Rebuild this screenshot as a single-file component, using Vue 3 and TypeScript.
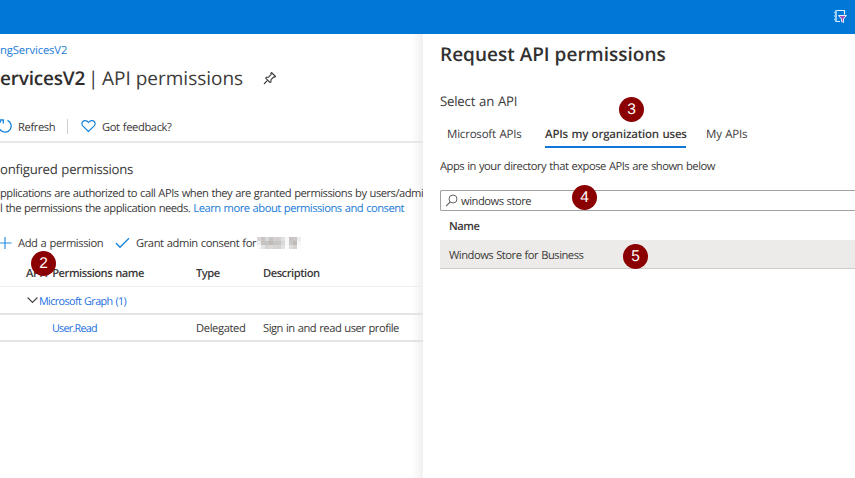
<script setup lang="ts">
interface Marker { label: string; left: number; top: number }

const markers: Marker[] = [
  { label: '2', left: 31, top: 251 },
  { label: '3', left: 619, top: 97 },
  { label: '4', left: 572, top: 185 },
  { label: '5', left: 623, top: 244 },
]
const mosaic: string[] = [
  '#d9d7d6', '#c9c4c2', '#dad8d8', '#c7c4c5', '#d5d0ce', '#d0d0d2', '#e3e1e0', '#f8f8f8', '#c6c3c2', '#cdc8c8', '#efeeee',
  '#eeeeee', '#c7c2c0', '#c3c3c5', '#bfbab8', '#c6c3c5', '#c9c5c2', '#d8d8d8', '#f8f8f8', '#cbc8c9', '#bdbab8', '#f8f8f8',
  '#f8f8f8', '#e5e3e2', '#d4d4d5', '#dedad8', '#d5d5d7', '#d5d2d0', '#e1e1e1', '#fbfbfb', '#dedddd', '#d6d3d2', '#fbfbfb',
]
</script>

<template>
  <div class="portal">
    <header class="topbar">
      <svg class="filter-icon" viewBox="0 0 16 16" width="16" height="16">
        <path d="M4 2.5H12.5V6.500M4 2.500V13.500H8" fill="none" stroke="#e2f1fc" stroke-width="1.2" />
        <path d="M4 2V14M2 4.500H5M2 8H5M2 11.500H5" fill="none" stroke="#9fd0f5" stroke-width="1.3" />
        <path d="M6.500 7.500H14.500L11.500 11V14.500L9.500 13.500V11Z" fill="#a34fc0" stroke="#e8f3fc" stroke-width="1" />
      </svg>
    </header>
    <div class="blades">
      <main class="overview">
        <nav class="crumb"><a class="t-crumb">ngServicesV2</a></nav>
        <h1 class="heading">
          <span class="t-app">ervicesV2</span><span class="t-bar">|</span><span class="t-page">API permissions</span>
          <svg class="pin" viewBox="0 0 14 14" width="14" height="14">
            <path d="M8.500 1.500 12.500 5.500 11.400 6.300 10.700 6 8 8.700 8 10.700 7 11.500 2.700 7.200 3.500 6.200 5.500 6.100 8.200 3.400 7.800 2.400ZM4.700 9.200 1 13" fill="none" stroke="#403e3d" stroke-width="1.1" stroke-linejoin="round" />
          </svg>
        </h1>
        <div class="toolbar">
          <svg class="refresh" viewBox="0 0 13 16" width="13" height="16">
            <path d="M7.500 2.300A6.200 6.200 0 1 1 1 3.200M0 2H3.300V5.500" fill="none" stroke="#1683dc" stroke-width="1.3" />
          </svg>
          <span class="t-refresh">Refresh</span>
          <i class="divider"></i>
          <svg class="heart" viewBox="0 0 15 14" width="15" height="14">
            <path d="M7.500 12.500 1.800 6.900C.2 5.200.8 2.700 2.700 1.900 4.500 1.100 6.300 1.800 7.500 3.500 8.700 1.800 10.500 1.100 12.300 1.900 14.200 2.700 14.800 5.200 13.200 6.900Z" fill="none" stroke="#1683dc" stroke-width="1.2" />
          </svg>
          <span class="t-feedback">Got feedback?</span>
        </div>
        <h2 class="section"><span class="t-section">onfigured permissions</span></h2>
        <p class="intro">
          <span class="t-intro1">pplications are authorized to call APIs when they are granted permissions by users/admi</span><br>
          <span class="t-intro2">l the permissions the application needs. <a>Learn more about permissions and consent</a></span>
        </p>
        <div class="commands">
          <svg class="plus" viewBox="0 0 12 14" width="12" height="14">
            <path d="M5 1V13M0 7H11.500" stroke="#2b8fe0" stroke-width="1.2" />
          </svg>
          <span class="t-add">Add a permission</span>
          <svg class="check" viewBox="0 0 15 12" width="15" height="12">
            <path d="M1 6 5 10.300 14 1.300" fill="none" stroke="#1683dc" stroke-width="1.3" />
          </svg>
          <span class="t-grant">Grant admin consent for</span>
          <span class="mosaic"><i v-for="(c, n) in mosaic" :key="n" :style="{ background: c }"></i></span>
        </div>
        <div class="grid head">
          <span class="c1"><span class="t-apis">API / Permissions name</span></span><span class="t-type">Type</span><span class="t-desc">Description</span>
        </div>
        <div class="grid group">
          <svg viewBox="0 0 11 8" width="11" height="8"><path d="M.6 1.500 5.500 6.500 10.400 1.500" fill="none" stroke="#4a4846" stroke-width="1.2" /></svg>
          <a class="t-graph">Microsoft Graph (1)</a>
        </div>
        <div class="grid entry">
          <a class="c1"><span class="t-user">User.Read</span></a><span class="t-deleg">Delegated</span><span class="t-sign">Sign in and read user profile</span>
        </div>
      </main>
      <aside class="request">
        <h2 class="title"><span class="t-title">Request API permissions</span></h2>
        <div class="select"><span class="t-select">Select an API</span></div>
        <div class="tabs">
          <span class="tab first"><span class="t-ms">Microsoft APIs</span></span>
          <span class="tab active"><span class="t-org">APIs my organization uses</span></span>
          <span class="tab"><span class="t-my">My APIs</span></span>
        </div>
        <p class="hint"><span class="t-hint">Apps in your directory that expose APIs are shown below</span></p>
        <div class="search">
          <svg viewBox="0 0 13 13" width="13" height="13"><circle cx="8" cy="5" r="4" fill="none" stroke="#6b6967" /><path d="M5.200 8 1 12.200" stroke="#6b6967" stroke-width="1.100" /></svg>
          <span class="t-query">windows store</span>
        </div>
        <div class="name"><span class="t-name">Name</span></div>
        <div class="result"><span class="t-result">Windows Store for Business</span></div>
      </aside>
    </div>
    <b v-for="m in markers" :key="m.label" class="marker" :style="{ left: m.left + 'px', top: m.top + 'px' }">{{ m.label }}</b>
  </div>
</template>

<style>
body { margin: 0; overflow: hidden; }
</style>

<style scoped>
.portal { position: relative; width: 855px; height: 478px; overflow: hidden; background: #fff; color: #3b3a39; font: 11.2px "Open Sans", "Noto Sans", sans-serif; text-rendering: geometricPrecision; letter-spacing: -.49px; word-spacing: .65px; white-space: nowrap; display: flex; flex-direction: column; }
.portal * { box-sizing: border-box; }
h1, h2, p { margin: 0; font-weight: 400; }
svg { flex: none; display: block; }
a { color: #1a7bd8; }
.topbar { height: 34px; flex: none; background: #0078d7; display: flex; justify-content: flex-end; padding: 8px 7px 0 0; }
.blades { flex: 1; display: flex; min-height: 0; }
.overview { width: 423px; flex: none; overflow: hidden; background: linear-gradient(to right, transparent 412px, #f0f0f0 423px); }
.crumb { height: 32px; display: flex; align-items: center; letter-spacing: -.1px; }
.heading { height: 24px; display: flex; align-items: center; font-size: 19px; letter-spacing: 0; word-spacing: 0; }
.t-app { font-weight: 600; color: #2f2d2c; letter-spacing: -.2px; width: 85px; }
.t-bar { margin: 0 0 0 3px; width: 14px; }
.t-page { width: 141px; }
.pin { margin-left: 20px; }
.toolbar { margin-top: 21px; height: 32px; display: flex; align-items: center; border-bottom: 2px solid #e8e8e8; letter-spacing: -.4px; }
.t-refresh { margin-left: 5px; width: 49px; padding-top: 2px; }
.t-feedback { padding-top: 2px; }
.divider { width: 1px; height: 15px; background: #d2d0ce; }
.heart { margin: 0 6px 0 13px; }
.section { height: 34px; margin-top: 9px; display: flex; align-items: center; font-size: 13.2px; letter-spacing: -.26px; }
.intro { line-height: 15px; letter-spacing: -.5px; }
.commands { height: 38px; margin-top: 8px; display: flex; align-items: center; letter-spacing: -.43px; }
.t-add { margin-left: 6px; width: 97px; }
.check { margin-right: 6px; }
.t-grant { width: 121px; }
.mosaic { width: 44px; height: 12px; display: grid; grid-template-columns: repeat(11, 4px); grid-auto-rows: 4px; filter: blur(.6px); }
.grid { display: flex; align-items: center; }
.head { height: 25px; padding: 0 0 2px 26px; font-weight: 600; border-bottom: 1px solid #eee; }
.c1 { width: 170px; }
.t-type { width: 67px; }
.group { height: 28px; padding-left: 27px; border-bottom: 2px solid #e4e4e4; }
.t-graph { margin-left: 1px; padding-top: 2px; color: #2470e0; font-size: 10.8px; letter-spacing: -.6px; }
.entry { height: 27px; padding: 2px 0 0 52px; border-bottom: 2px solid #e4e4e4; }
.entry .c1 { width: 144px; color: #2470e0; font-size: 10.8px; letter-spacing: -.75px; }
.t-deleg { width: 67px; letter-spacing: -.38px; }
.request { flex: 1; min-width: 0; background: #fff; padding-left: 17px; }
.title { height: 40px; display: flex; align-items: center; font-size: 19px; font-weight: 600; color: #323130; letter-spacing: 0; word-spacing: 0; }
.select { height: 34px; margin-top: 10px; display: flex; align-items: center; font-size: 13.2px; letter-spacing: -.2px; }
.tabs { height: 30px; display: flex; gap: 20px; padding-left: 7px; font-size: 11.5px; letter-spacing: -.2px; }
.tab { height: 30px; display: flex; align-items: center; padding-top: 2px; }
.first { width: 78px; }
.active { width: 141px; font-weight: 600; border-bottom: 2px solid #1176d8; padding-top: 4px; }
.hint { height: 36px; padding-top: 1px; display: flex; align-items: center; }
.search { height: 21px; margin-top: 6px; border: 1px solid #a3a19f; border-right: 0; border-radius: 2px 0 0 2px; display: flex; align-items: center; padding-left: 4px; }
.t-query { margin-left: 3px; padding-top: 2px; }
.name { height: 29px; padding: 2px 0 0 9px; display: flex; align-items: center; font-weight: 600; }
.result { height: 29px; padding: 3px 0 0 9px; background: #edebe9; border-bottom: 1px solid #cfcdcb; display: flex; align-items: center; }
.marker { position: absolute; width: 25px; height: 25px; border-radius: 50%; background: #8b0000; color: #fff; font: 15.500px/25px "Liberation Sans", sans-serif; letter-spacing: 0; text-align: center; }
</style>
